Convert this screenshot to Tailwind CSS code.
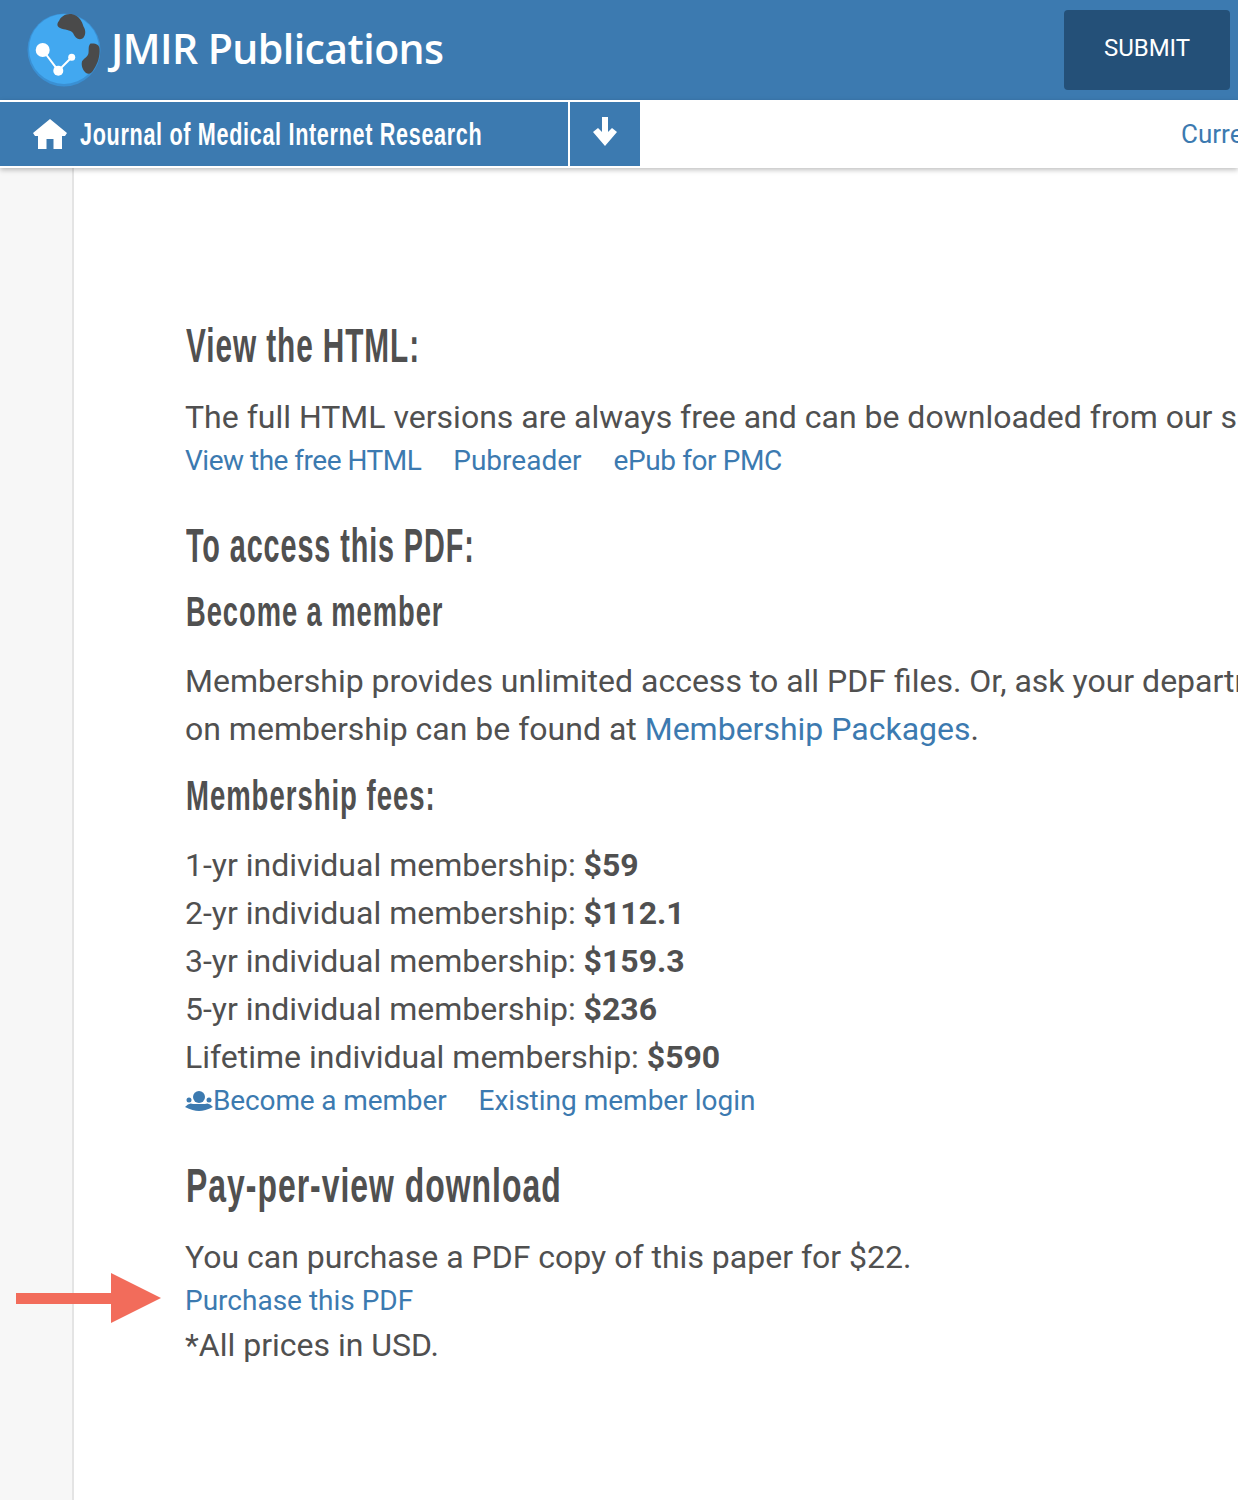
<!DOCTYPE html>
<html lang="en">
<head>
    <meta charset="UTF-8">
    <meta name="viewport" content="width=device-width, initial-scale=1.0">
    <title>JMIR Publications</title>
    <script src="https://cdn.jsdelivr.net/npm/@tailwindcss/browser@4"></script>
</head>
<body class="relative h-[1500px] w-[1238px] overflow-hidden bg-white font-['Roboto',sans-serif] text-[#505050]">

    <header class="flex h-[100px] items-center justify-between bg-[#3c7ab0] pl-[27px] pr-2">
        <div class="flex items-center">
            <svg class="h-[74px] w-[74px]" viewBox="0 0 74 74">
                <circle cx="37" cy="37" r="36.500" fill="#3a90d4"/>
                <circle cx="37" cy="36" r="35" fill="#42a8f0"/>
                <path d="M32 8 C34 3 40 0 46 1.500 C52 3 55 8 56.500 13.500 C59 17 59 23 55.500 25.500 C51.500 27.500 48 25 46 20 C43 16.500 38 17 33 15 C29.500 13.500 30 10 32 8Z" fill="#4a4a4a"/>
                <path d="M63.500 30.500 C68 30 72.500 31 72.500 36 C73 43 71 50 67 56 C65 60 62 62 59 60 C55.500 57 54 52 55 48.500 C57 45 61 44 61.500 40 C62 36 61 33 63.500 30.500Z" fill="#4a4a4a"/>
                <path d="M15.700 37 L31.300 57.700 L44.700 44.300" fill="none" stroke="white" stroke-width="2"/>
                <circle cx="15.700" cy="37" r="7" fill="white"/><circle cx="31.300" cy="57.700" r="5" fill="white"/><circle cx="44.700" cy="44.300" r="3.500" fill="white"/>
            </svg>
            <span class="-mt-1 ml-[10px] font-['Open_Sans',sans-serif] text-[41px] leading-none font-semibold tracking-[-0.55px] text-white">JMIR Publications</span>
        </div>
        <button class="flex h-20 w-[166px] items-center justify-center rounded bg-[#245078] pb-1 text-2xl text-white">SUBMIT</button>
    </header>

    <nav class="relative z-10 flex h-[68px] items-stretch border-y-2 border-white bg-white shadow-[0_2px_5px_rgba(0,0,0,0.25)]">
        <div class="flex w-[568px] items-center bg-[#3c7ab0] pl-[33px] text-white">
            <svg class="h-[30px] w-[34px] shrink-0" viewBox="0 0 34 30" fill="white">
                <path d="M17 0 L34 14 L32 17 H29 V30 H20.500 V20 H13.500 V30 H5 V17 H2 L0 14Z"/>
            </svg>
            <span class="ml-[13px] origin-left scale-x-[0.675] whitespace-nowrap font-['Liberation_Sans',sans-serif] text-[32px] leading-none font-bold tracking-[1px]">Journal of Medical Internet Research</span>
        </div>
        <div class="ml-0.5 flex w-[70px] items-center justify-center bg-[#3c7ab0]">
            <svg class="-mt-1 h-[30px] w-6" viewBox="0 0 24 30" fill="white"><path d="M9 0 H15 V15 L19 11 L24 15 L12 29 L0 15 L5 11 L9 15Z"/></svg>
        </div>
        <div class="flex flex-1 items-center overflow-hidden">
            <a class="ml-[541px] whitespace-nowrap text-[26px] text-[#3c7ab0]">Current Issue</a>
        </div>
    </nav>

    <div class="flex h-[1332px]">
        <aside class="w-[74px] border-r-2 border-[#e4e4e4] bg-[#f7f7f7]"></aside>
        <main class="flex-1 overflow-hidden whitespace-nowrap pl-[111px] pt-[150px] text-[32px] leading-[48px]">
            <h2 class="ml-px origin-left scale-x-[0.62] font-['Liberation_Sans',sans-serif] text-[48px] leading-[56px] font-bold tracking-[1.5px]">View the HTML:</h2>
            <p class="mt-[21px] leading-[44px]">The full HTML versions are always free and can be downloaded from our site.</p>
            <div class="mt-px flex gap-8 text-[28px] leading-[42px] text-[#3c7ab0]"><a class="tracking-[-0.5px]">View the free HTML</a><a>Pubreader</a><a class="tracking-[-0.4px]">ePub for PMC</a></div>

            <h2 class="ml-px mt-[36px] origin-left scale-x-[0.6] font-['Liberation_Sans',sans-serif] text-[48px] leading-[56px] font-bold tracking-[1.5px]">To access this PDF:</h2>
            <h3 class="ml-px mt-3 origin-left scale-x-[0.65] font-['Liberation_Sans',sans-serif] text-[42px] leading-[52px] font-bold tracking-[1.5px]">Become a member</h3>
            <p class="mt-[19px]">Membership provides unlimited access to all PDF files. Or, ask your department.</p>
            <p>on membership can be found at <a class="text-[#3c7ab0]">Membership Packages</a>.</p>
            <h3 class="ml-px mt-[17px] origin-left scale-x-[0.655] font-['Liberation_Sans',sans-serif] text-[42px] leading-[52px] font-bold tracking-[1.5px]">Membership fees:</h3>

            <ul class="mt-[19px]">
                <li>1-yr individual membership: <b>$59</b></li>
                <li>2-yr individual membership: <b>$112.1</b></li>
                <li>3-yr individual membership: <b>$159.3</b></li>
                <li>5-yr individual membership: <b>$236</b></li>
                <li>Lifetime individual membership: <b>$590</b></li>
            </ul>
            <div class="flex gap-8 text-[28px] leading-[40px] text-[#3c7ab0]">
                <a class="flex items-center tracking-[-0.13px]">
                    <svg class="h-5 w-7" viewBox="0 0 28 20" fill="#3c7ab0">
                        <circle cx="14" cy="6" r="6"/><circle cx="4" cy="9" r="2.5"/><circle cx="24" cy="9" r="2.5"/>
                        <path d="M0 16 Q4 11 8 13 L20 13 Q24 11 28 16 Q20 20 14 20 Q8 20 0 16Z"/>
                    </svg>Become a member</a>
                <a>Existing member login</a>
            </div>

            <h2 class="ml-px mt-[37px] origin-left scale-x-[0.665] font-['Liberation_Sans',sans-serif] text-[48px] leading-[56px] font-bold tracking-[1.5px]">Pay-per-view download</h2>
            <p class="mt-[21px] leading-[44px]">You can purchase a PDF copy of this paper for $22.</p>
            <a class="mt-px block text-[28px] leading-[42px] text-[#3c7ab0]">Purchase this PDF</a>
            <p class="leading-[46px]">*All prices in USD.</p>
        </main>
    </div>

    <svg class="absolute left-[16px] top-[1272px] h-[52px] w-[146px]" viewBox="0 0 146 52" fill="#f26c5b">
        <path d="M0 21 H95 V1 L145 26 L95 51 V32 H0Z"/>
    </svg>
</body>
</html>
